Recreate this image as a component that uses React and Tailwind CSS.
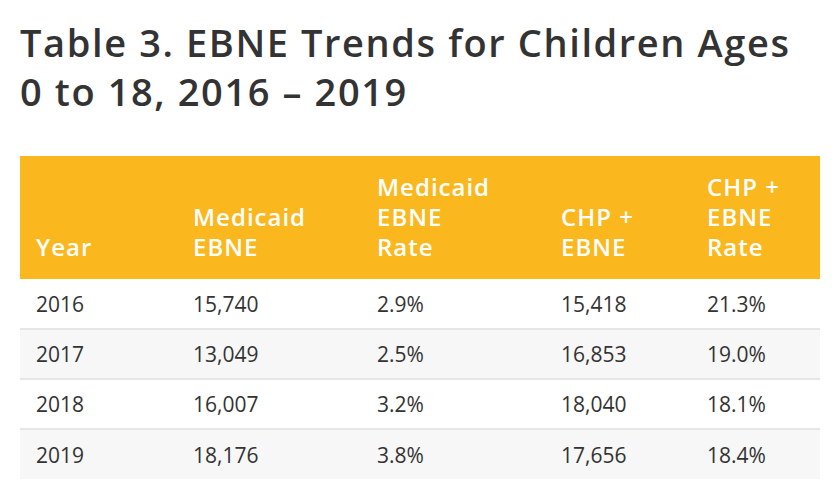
const rows = [
  ["2016", "15,740", "2.9%", "15,418", "21.3%"],
  ["2017", "13,049", "2.5%", "16,853", "19.0%"],
  ["2018", "16,007", "3.2%", "18,040", "18.1%"],
  ["2019", "18,176", "3.8%", "17,656", "18.4%"],
];

const App = () => {
  return (
    <div className="w-[840px] h-[496px] bg-white px-5 pt-[18px] text-[#333333] font-['Open_Sans',sans-serif]">
      <h1 className="text-[38px] leading-[49px] font-semibold tracking-[1.6px]">
        Table 3. EBNE Trends for Children Ages
        <br />
        0 to 18, 2016 – 2019
      </h1>

      <table className="mt-[40px] w-[800px] table-fixed border-collapse">
        <colgroup>
          <col className="w-[157px]" />
          <col className="w-[184px]" />
          <col className="w-[184px]" />
          <col className="w-[146px]" />
          <col className="w-[129px]" />
        </colgroup>
        <thead>
          <tr className="bg-[#fbb81e] text-white text-[24px] leading-[30px] tracking-[1px]">
            <th className="text-left align-bottom pl-4 pt-[16px] pb-[17px] font-semibold">Year</th>
            <th className="text-left align-bottom pl-4 pt-[16px] pb-[17px] font-semibold">Medicaid<br />EBNE</th>
            <th className="text-left align-bottom pl-4 pt-[16px] pb-[17px] font-semibold">Medicaid<br />EBNE<br />Rate</th>
            <th className="text-left align-bottom pl-4 pt-[16px] pb-[17px] font-semibold">CHP +<br />EBNE</th>
            <th className="text-left align-bottom pl-4 pt-[16px] pb-[17px] font-semibold">CHP +<br />EBNE<br />Rate</th>
          </tr>
        </thead>
        <tbody>
          {rows.map((r, i) => (
            <tr key={r[0]} className={(i % 2 === 1 ? "bg-[#f7f7f7] " : "bg-white ") + (i < rows.length - 1 ? "border-b-2 border-[#e6e6e6]" : "")}>
              {r.map((c, j) => (
                <td key={j} className="h-[50px] pl-4 text-[21px] leading-[28px] text-[#333333] align-middle">{c}</td>
              ))}
            </tr>
          ))}
        </tbody>
      </table>
    </div>
  );
};

export default App;
